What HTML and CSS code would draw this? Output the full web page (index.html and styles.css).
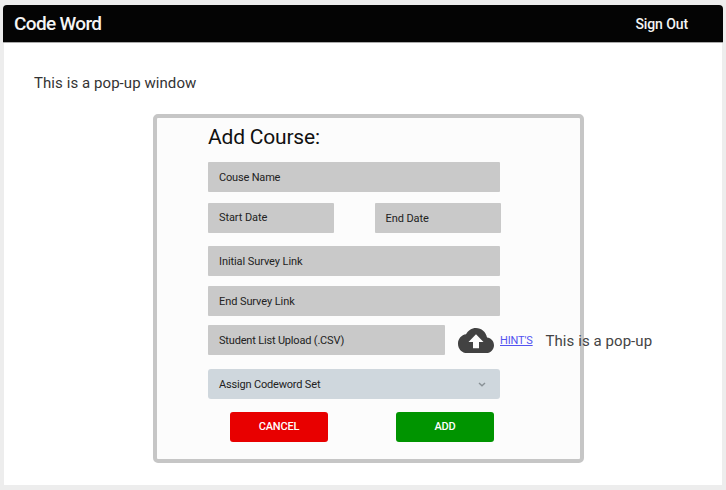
FILE: index.html
```html
<!DOCTYPE html>
<html lang="en">
<head>
<meta charset="utf-8">
<title>Code Word</title>
<link rel="stylesheet" href="styles.css">
</head>
<body>
<div class="window">
  <header class="topbar">
    <h1 class="brand">Code Word</h1>
    <a class="signout">Sign Out</a>
  </header>
  <main class="content">
    <p class="note">This is a pop-up window</p>
    <form class="dialog">
      <h2 class="title">Add Course:</h2>
      <div class="field name">Couse Name</div>
      <div class="dates">
        <div class="field start">Start Date</div>
        <div class="field end">End Date</div>
      </div>
      <div class="field initial">Initial Survey Link</div>
      <div class="field final">End Survey Link</div>
      <div class="upload">
        <div class="field file">Student List Upload (.CSV)</div>
        <svg class="cloud" viewBox="0 4 24 16" preserveAspectRatio="none"><path d="M19.35 10.04C18.67 6.59 15.64 4 12 4 9.11 4 6.6 5.64 5.35 8.04 2.34 8.36 0 10.91 0 14c0 3.31 2.69 6 6 6h13c2.76 0 5-2.24 5-5 0-2.64-2.05-4.78-4.65-4.96zM14 13v4h-4v-4H7l5-5 5 5h-3z"/></svg>
        <a class="hints">HINT'S</a>
        <span class="hint-text">This is a pop-up</span>
      </div>
      <div class="field select">Assign Codeword Set
        <svg class="chevron" viewBox="0 0 8 5"><path d="M1 1l3 2.8L7 1"/></svg>
      </div>
      <div class="actions">
        <button class="btn cancel" type="button">CANCEL</button>
        <button class="btn add" type="button">ADD</button>
      </div>
    </form>
  </main>
</div>
</body>
</html>
```
FILE: styles.css
```css
* { box-sizing: border-box; }
body {
  margin: 0;
  height: 490px;
  padding: 4.5px 3px 5px;
  background: #ededed;
  font-family: Roboto, sans-serif;
  color: #333;
  overflow: hidden;
}
.window { height: 480.5px; }
.topbar {
  display: flex;
  justify-content: space-between;
  height: 38px;
  padding: 0 35px 0 11px;
  background: #040404;
  border: 1px solid #aaa;
  border-width: 0 0 1px;
  border-radius: 4px 4px 0 0;
  color: #f4f4f4;
}
.brand { margin: 0; font-size: 19px; font-weight: 500; line-height: 37px; letter-spacing: -0.65px; }
.signout { font-size: 14px; font-weight: 500; line-height: 39px; letter-spacing: -0.1px; }
.content {
  height: 442.5px;
  margin: 0 1px;
  padding: 30.5px 30px 0;
  background: #fff;
}
.note { margin: 0; font-size: 15px; line-height: 20px; letter-spacing: 0.07px; }
.dialog {
  width: 431px;
  height: 349px;
  margin: 21px 0 0 119px;
  padding: 6px 0 0 51px;
  border: 4px solid #c6c6c6;
  border-radius: 5px;
  background: #fcfcfc;
}
.title {
  margin: 0;
  height: 38px;
  color: #111;
  font-size: 21px;
  font-weight: 400;
  line-height: 26px;
  letter-spacing: -0.2px;
}
.field {
  width: 292px;
  height: 30px;
  padding-left: 11px;
  border-radius: 1px;
  background: #c9c9c9;
  color: #222;
  font-size: 11px;
  line-height: 32px;
  letter-spacing: -0.08px;
  white-space: nowrap;
}
.dates { display: flex; gap: 40.5px; width: 292.5px; margin: 10.5px 0 13px; }
.start { width: 126px; line-height: 30px; }
.end { width: 126px; margin-top: 0.5px; }
.name, .file, .select { letter-spacing: -0.18px; }
.final { margin: 10px 0 9px; }
.upload { display: flex; align-items: center; height: 30px; white-space: nowrap; }
.file { flex: none; width: 237px; }
.cloud { flex: none; width: 36px; height: 25px; margin: 1px 0 0 13px; fill: #424242; }
.hints {
  flex: none;
  width: 33px;
  margin: 1px 0 0 6px;
  color: #5353f0;
  font-size: 11px;
  line-height: 20px;
  letter-spacing: -0.15px;
  text-decoration: underline;
}
.hint-text { margin: 2px 0 0 12.5px; color: #444; font-size: 15px; line-height: 20px; letter-spacing: 0.07px; }
.select {
  display: flex;
  align-items: center;
  justify-content: space-between;
  margin: 14px 0 12.5px;
  padding: 2px 14px 0 11px;
  border-radius: 3px;
  background: #cfd7dd;
}
.chevron { width: 8px; height: 5px; margin-top: -2px; fill: none; stroke: #899196; stroke-width: 1.4; }
.actions { display: flex; gap: 68px; margin-left: 22px; }
.btn {
  width: 98px;
  height: 30px;
  padding: 0;
  border: 0;
  border-radius: 3px;
  color: #fff;
  font: 500 11px/30px Roboto, sans-serif;
  letter-spacing: -0.2px;
}
.cancel { background: #e80000; }
.add { background: #009400; }
```
